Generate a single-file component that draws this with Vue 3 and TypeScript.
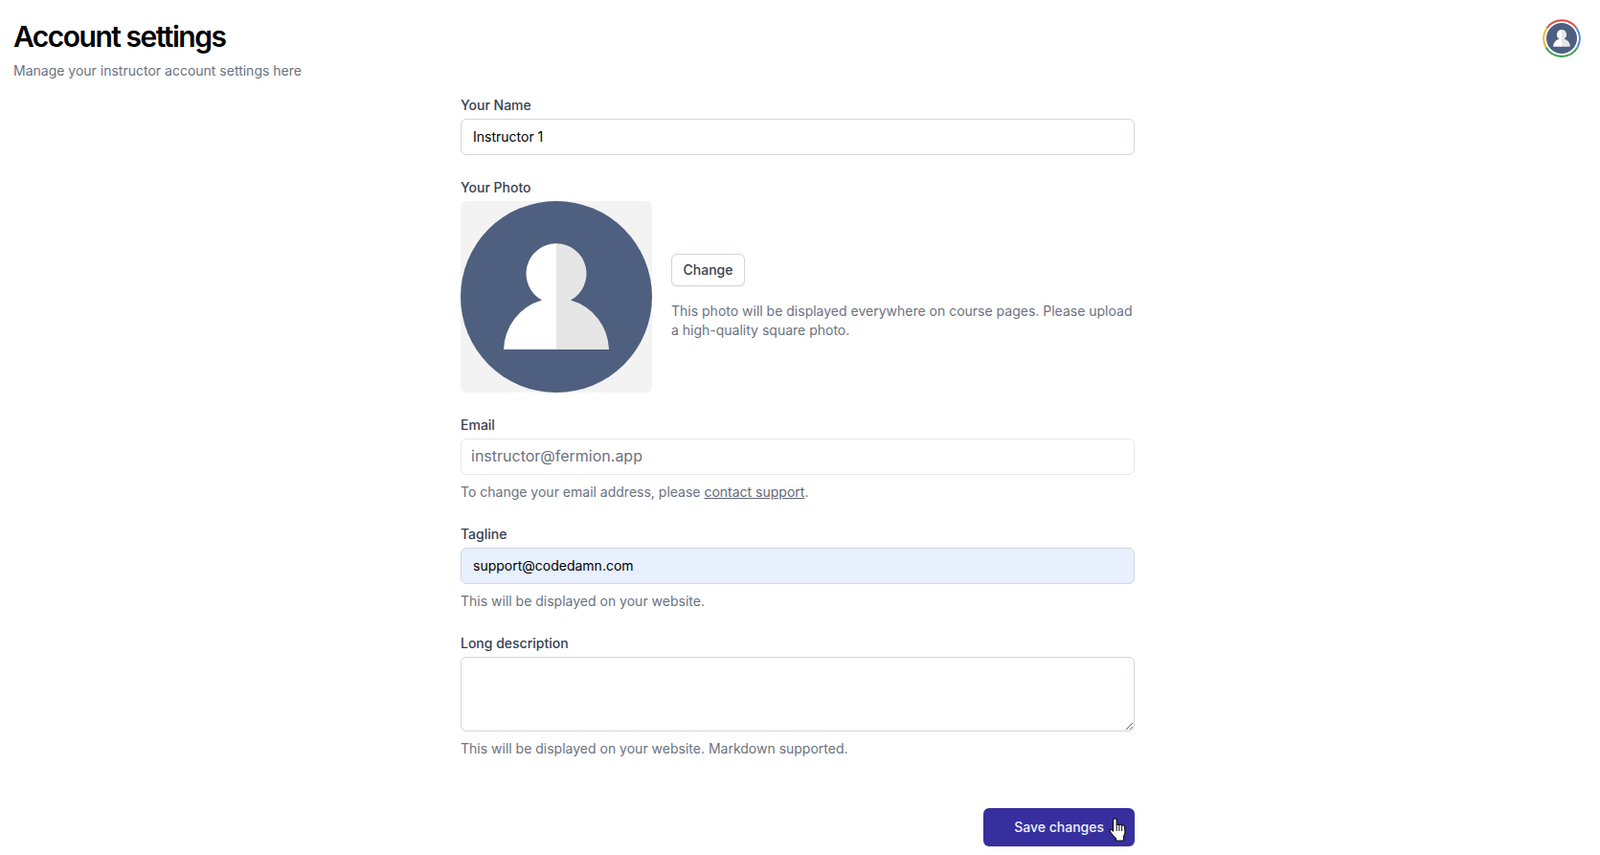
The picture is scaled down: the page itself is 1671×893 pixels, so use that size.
<script setup lang="ts">
const title = 'Account settings'
</script>

<template>
  <div class="page">
    <header class="top">
      <div class="heading">
        <h1>{{ title }}</h1>
        <p>Manage your instructor account settings here</p>
      </div>
      <div class="avatar">
        <svg viewBox="0 0 40 40" width="40" height="40">
          <path d="M4.400 9.500A19 19 0 0 1 35.600 9.500" class="r" />
          <path d="M35.600 9.500A19 19 0 0 1 36.400 29.500" class="b" />
          <path d="M36.400 29.500A19 19 0 0 1 3.600 29.500" class="g" />
          <path d="M3.600 29.500A19 19 0 0 1 4.400 9.500" class="y" />
          <circle cx="20" cy="20" r="16" fill="#4f5f7f" />
          <g transform="translate(4 4) scale(.16)">
            <path d="M100 44.300a31.500 31.500 0 0 0-15 59.200A55 55 0 0 0 45 155h55z" fill="#fff" />
            <path d="M100 44.300a31.500 31.500 0 0 1 15 59.200A55 55 0 0 1 155 155h-55z" fill="#e6e6e6" />
          </g>
        </svg>
      </div>
    </header>

    <form class="form" @submit.prevent>
      <div class="field name">
        <label>Your Name</label>
        <input class="input" value="Instructor 1" />
      </div>

      <div class="field photo">
        <label>Your Photo</label>
        <div class="photo-row">
          <div class="photo-box">
            <svg viewBox="0 0 200 200" width="200" height="200">
              <circle cx="100" cy="100" r="100" fill="#4f5f7f" />
              <path d="M100 44.300a31.500 31.500 0 0 0-15 59.200A55 55 0 0 0 45 155h55z" fill="#fff" />
              <path d="M100 44.300a31.500 31.500 0 0 1 15 59.200A55 55 0 0 1 155 155h-55z" fill="#e6e6e6" />
            </svg>
          </div>
          <div class="photo-side">
            <button type="button" class="change">Change</button>
            <p class="hint">This photo will be displayed everywhere on course pages. Please upload a high-quality square photo.</p>
          </div>
        </div>
      </div>

      <div class="field email">
        <label>Email</label>
        <input class="input disabled" value="instructor@fermion.app" disabled />
        <p class="hint below">To change your email address, please <a href="#">contact support</a>.</p>
      </div>

      <div class="field tagline">
        <label>Tagline</label>
        <input class="input filled" value="support@codedamn.com" />
        <p class="hint below">This will be displayed on your website.</p>
      </div>

      <div class="field long">
        <label>Long description</label>
        <textarea class="input area"></textarea>
        <p class="hint below">This will be displayed on your website. Markdown supported.</p>
      </div>

      <div class="actions">
        <button type="submit" class="save">
          Save changes
          <svg class="cursor" viewBox="0 0 18 25" width="18" height="25">
            <path d="M6.400.800c1.100 0 1.800.900 1.800 2V7.600c.4-.7 2.200-.9 2.700.2.500-.8 2.300-.8 2.700.4.600-.6 2.600-.4 2.800 1.200l.6 5.600c.1 1.600-.6 3-1.500 4.500V24H7.400v-2.300c-1.500-1.400-3.700-3.800-5.500-6.200C1 14.400.6 13.300 1.400 12.700c.8-.6 1.900-.1 2.600.7l.6.7V2.800c0-1.100.8-2 1.800-2z" fill="#fff" stroke="#111" stroke-width="1.200" stroke-linejoin="round" />
            <path d="M8.200 7.600V14M10.900 7.800V14M13.600 8.200V14" stroke="#111" stroke-width="1" fill="none" />
          </svg>
        </button>
      </div>
    </form>
  </div>
</template>

<style>
html, body { margin: 0; background: #fff; }
</style>

<style scoped>
.page {
  box-sizing: border-box;
  height: 893px;
  overflow: hidden;
  background: #fff;
  font-family: Inter, "Liberation Sans", sans-serif;
  color: #111827;
}
.top {
  display: flex;
  justify-content: space-between;
  align-items: flex-start;
  padding: 20px 2px 0 14px;
  height: 100px;
  box-sizing: border-box;
}
h1 {
  margin: 0;
  font-size: 30px;
  line-height: 36px;
  font-weight: 600;
  letter-spacing: -1.5px;
  color: #000;
}
.heading p {
  margin: 8px 0 0;
  font-size: 14px;
  line-height: 20px;
  color: #6b7280;
}
.avatar {
  width: 40px;
  height: 40px;
  margin-right: 18px;
}
.avatar svg { display: block; }
.r, .b, .g, .y { fill: none; stroke-width: 2; }
.r { stroke: #e04a3a; }
.b { stroke: #4a84e8; }
.g { stroke: #38a04f; }
.y { stroke: #f2b632; }

.form {
  width: 704px;
  margin: 0 0 0 481px;
}
.field { display: block; }
label {
  display: block;
  font-size: 14px;
  line-height: 20px;
  font-weight: 500;
  color: #374151;
  margin-bottom: 4px;
}
.input {
  display: block;
  box-sizing: border-box;
  width: 100%;
  height: 38px;
  padding: 6px 12px 8px;
  border: 1px solid #d1d5db;
  border-radius: 6px;
  background: #fff;
  font-family: inherit;
  font-size: 14px;
  line-height: 20px;
  color: #000;
  outline: none;
}
.disabled {
  border-color: #e5e7eb;
  font-size: 16px;
  color: #6b7280;
  padding: 6px 11px 8px 10px;
}
.filled { background: #e8f0fe; }
.area { height: 78px; resize: vertical; }
.photo { margin-top: 24px; }
.photo label { margin-bottom: 4px; }
.photo-row {
  display: flex;
  align-items: center;
  gap: 20px;
}
.photo-box {
  width: 200px;
  height: 200px;
  flex: none;
  background: #f3f3f3;
  border-radius: 6px;
  overflow: hidden;
}
.photo-box svg { display: block; }
.photo-side { flex: 1; min-width: 0; }
.change {
  display: block;
  box-sizing: border-box;
  width: 77px;
  height: 34px;
  padding: 0 0 2px;
  border: 1px solid #d1d5db;
  border-radius: 6px;
  background: #fff;
  box-shadow: 0 1px 2px rgba(0, 0, 0, 0.05);
  font-family: inherit;
  font-size: 14px;
  font-weight: 500;
  color: #374151;
}
.hint {
  margin: 16px 0 0;
  font-size: 14px;
  line-height: 20px;
  color: #6b7280;
}
.hint.below { margin-top: 8px; }
.hint a { color: #616875; text-decoration: underline; }
.email { margin-top: 24px; }
.tagline { margin-top: 24px; }
.long { margin-top: 24px; }
.actions {
  display: flex;
  justify-content: flex-end;
  margin-top: 52px;
}
.save {
  position: relative;
  box-sizing: border-box;
  width: 158px;
  height: 40px;
  padding: 0 32px 2px 0;
  text-align: right;
  border: none;
  border-radius: 6px;
  background: #372f9e;
  box-shadow: 0 1px 2px rgba(0, 0, 0, 0.05);
  color: #eef2ff;
  font-family: inherit;
  font-size: 14px;
  font-weight: 500;
}
.cursor {
  position: absolute;
  left: 131px;
  top: 10px;
}
</style>
